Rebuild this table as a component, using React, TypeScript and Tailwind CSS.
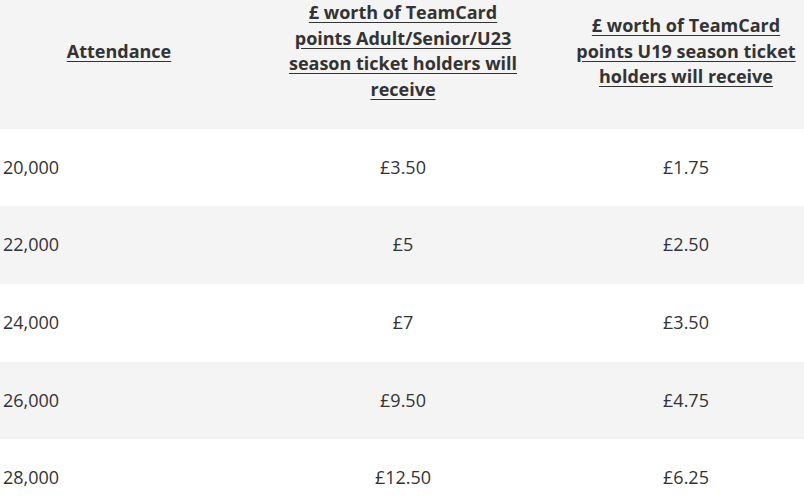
import React from "react";

const rows = [
  ["20,000", "£3.50", "£1.75"],
  ["22,000", "£5", "£2.50"],
  ["24,000", "£7", "£3.50"],
  ["26,000", "£9.50", "£4.75"],
  ["28,000", "£12.50", "£6.25"],
];

export default function App() {
  return (
    <div
      className="w-[804px] h-[500px] overflow-hidden bg-white text-[#333333]"
      style={{ fontFamily: '"Open Sans", sans-serif' }}
    >
      <table className="w-[804px] table-fixed border-collapse text-[18px] leading-[25.7px]">
        <colgroup>
          <col className="w-[238px]" />
          <col className="w-[330px]" />
          <col className="w-[236px]" />
        </colgroup>
        <thead>
          <tr className="bg-[#f4f4f4]">
            <th className="pt-0 pb-[25.7px] px-[4px] align-middle text-center font-bold underline underline-offset-[3px]">
              Attendance
            </th>
            <th className="pt-0 pb-[25.7px] px-[45px] align-middle text-center font-bold underline underline-offset-[3px]">
              £ worth of TeamCard points Adult/Senior/U23 season ticket holders will receive
            </th>
            <th className="pt-0 pb-[25.7px] px-[4px] align-middle text-center font-bold underline underline-offset-[3px]">
              £ worth of TeamCard points U19 season ticket holders will receive
            </th>
          </tr>
        </thead>
        <tbody>
          {rows.map((r, i) => (
            <tr key={i} className={i % 2 === 1 ? "bg-[#f4f4f4]" : "bg-white"}>
              <td className="py-[26px] pl-[3px] text-left">{r[0]}</td>
              <td className="py-[26px] text-center">{r[1]}</td>
              <td className="py-[26px] text-center">{r[2]}</td>
            </tr>
          ))}
        </tbody>
      </table>
    </div>
  );
}
